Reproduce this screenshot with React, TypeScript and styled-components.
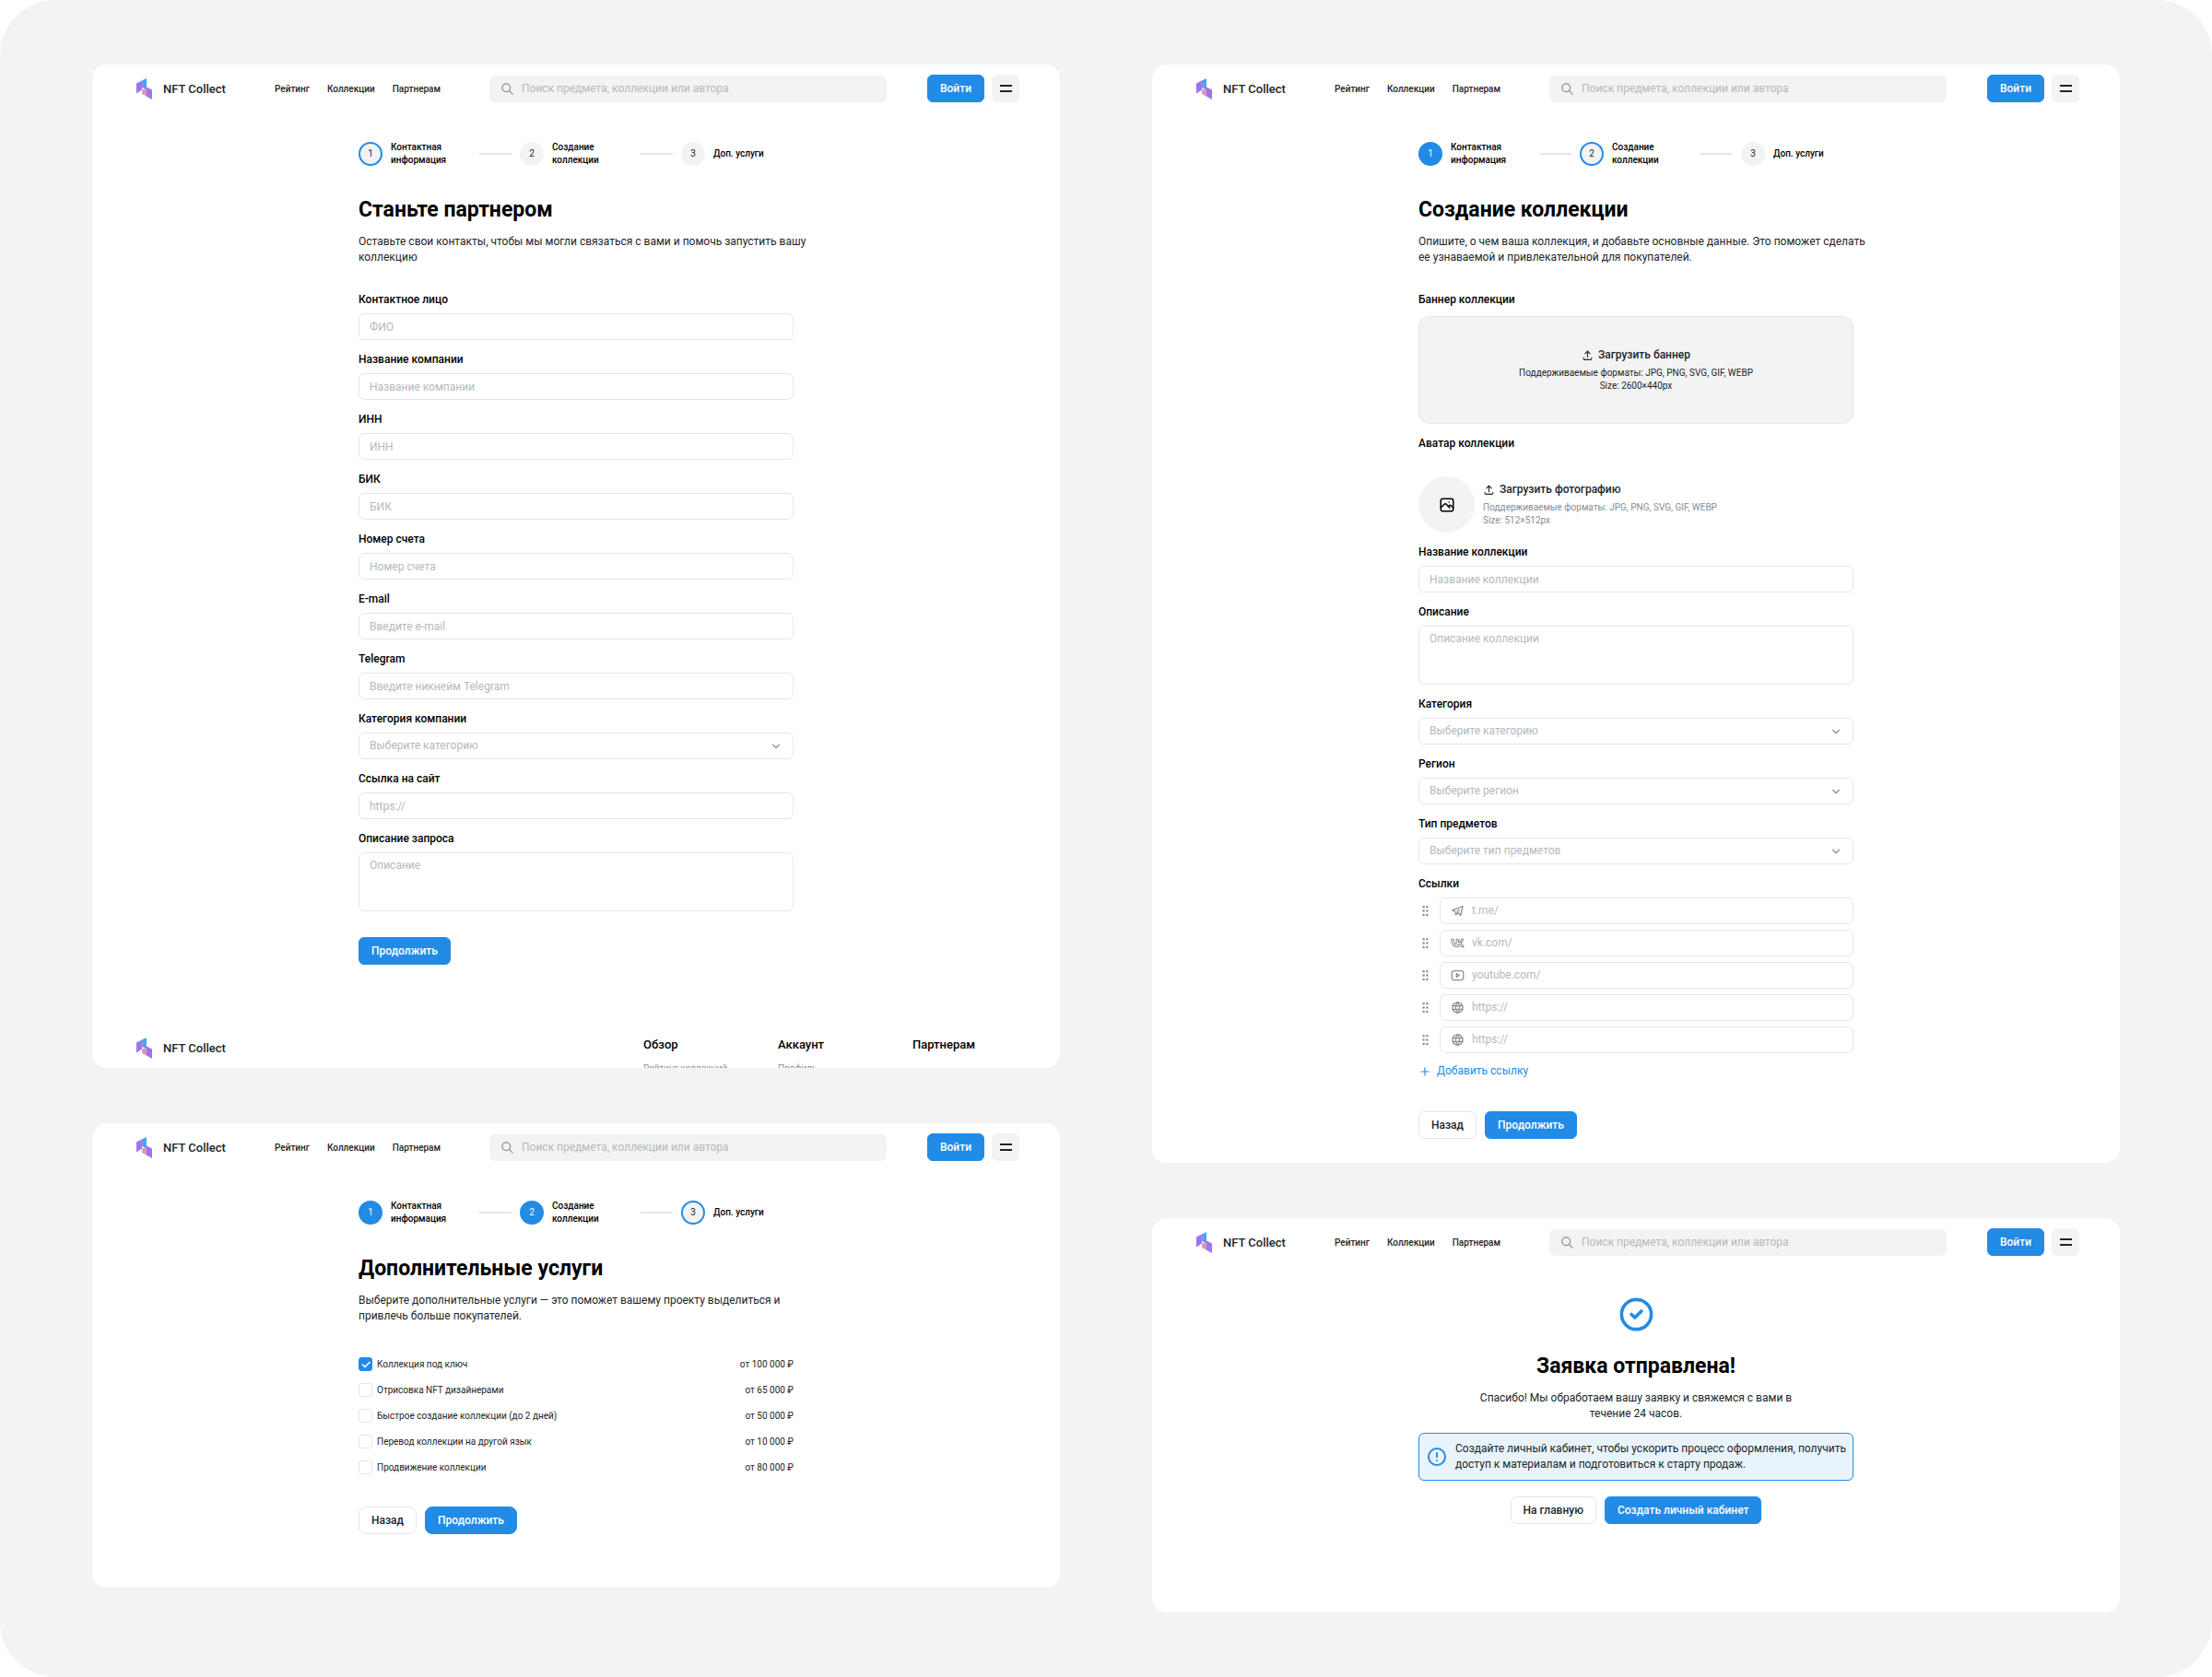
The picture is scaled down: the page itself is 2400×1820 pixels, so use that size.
import React, { useId, useState } from "react";
import styled, { createGlobalStyle, css } from "styled-components";
import {
  TbAlertCircle,
  TbBrandTelegram,
  TbBrandYoutube,
  TbCheck,
  TbChevronDown,
  TbCircleCheck,
  TbGripVertical,
  TbPhoto,
  TbPlus,
  TbSearch,
  TbUpload,
  TbWorld,
} from "react-icons/tb";

const color = {
  page: "#f3f3f3",
  blue: "#228be6",
  ink: "#212529",
  grey: "#868e96",
  hint: "#b4b9be",
  line: "#e3e6e8",
};

const GlobalStyle = createGlobalStyle`
  *, *::before, *::after { box-sizing: border-box; }
  body {
    margin: 0;
    background: #fff;
    color: ${color.ink};
    font: 400 12px/17px Roboto, "Liberation Sans", sans-serif;
  }
  button, input, select, textarea { font: inherit; color: inherit; }
  button { cursor: pointer; }
  h1, h2, p, ul, ol { margin: 0; padding: 0; }
  ul, ol { list-style: none; }
  a { color: inherit; text-decoration: none; }
  svg { display: block; flex: none; }
`;

const Board = styled.main`
  display: grid;
  grid-template-columns: 1fr 1fr;
  gap: 100px;
  min-height: 100vh;
  padding: 70px 100px;
  border-radius: 60px;
  background: ${color.page};
`;

const Stack = styled.div`
  display: flex;
  flex-direction: column;
  gap: 60px;
`;

const Screen = styled.section`
  border-radius: 16px;
  background: #fff;
  overflow: hidden;
`;

const Header = styled.header`
  display: flex;
  align-items: center;
  padding: 11px 44px 12px 48px;
`;

const Brand = styled.a`
  display: flex;
  align-items: center;
  gap: 12px;
  width: 150px;
  font-size: 13px;
  font-weight: 500;
`;

const Nav = styled.nav`
  display: flex;
  gap: 19px;
  margin-right: 53px;
  font-size: 10px;
  font-weight: 500;
`;

const SearchBox = styled.label`
  display: flex;
  flex: 1;
  align-items: center;
  gap: 8px;
  height: 29px;
  padding: 0 12px;
  border-radius: 6px;
  background: ${color.page};
  color: ${color.grey};
`;

const BareInput = styled.input`
  flex: 1;
  min-width: 0;
  padding: 0;
  border: 0;
  outline: 0;
  background: transparent;
  color: ${color.ink};
  &::placeholder { color: ${color.hint}; opacity: 1; }
`;

const HeaderActions = styled.div`
  display: flex;
  gap: 8px;
  margin-left: 44px;
`;

const Button = styled.button<{ $outline?: boolean; $round?: boolean }>`
  height: 30px;
  padding: 0 13px;
  border: 1px solid ${(p) => (p.$outline ? color.line : color.blue)};
  border-radius: ${(p) => (p.$round ? 8 : 6)}px;
  background: ${(p) => (p.$outline ? "#fff" : color.blue)};
  color: ${(p) => (p.$outline ? color.ink : "#fff")};
  font-weight: 500;
  white-space: nowrap;
`;

const MenuButton = styled.button`
  display: flex;
  flex-direction: column;
  align-items: center;
  justify-content: center;
  gap: 4px;
  width: 30px;
  height: 30px;
  padding: 0;
  border: 0;
  border-radius: 6px;
  background: ${color.page};
`;

const MenuLine = styled.span`
  width: 13px;
  height: 2px;
  background: ${color.ink};
`;

const Content = styled.div<{ $bottom: number; $centered?: boolean }>`
  width: 100%;
  max-width: 472px;
  margin: 0 auto;
  padding: 30px 0 ${(p) => p.$bottom}px;
  ${(p) =>
    p.$centered &&
    css`
      display: flex;
      flex-direction: column;
      align-items: center;
      text-align: center;
    `}
`;

const StepList = styled.ol`
  display: flex;
  align-items: center;
  gap: 9px;
  height: 28px;
`;

const Step = styled.li`
  display: flex;
  align-items: center;
  gap: 9px;
  width: 122px;
  color: #000;
  font-size: 10px;
  font-weight: 500;
  line-height: 14px;
`;

const StepRule = styled.li`
  width: 35px;
  height: 2px;
  background: #e4e6e8;
`;

type StepState = "done" | "current" | "next";

const StepMark = styled.span<{ $state: StepState }>`
  display: grid;
  flex: none;
  place-items: center;
  width: 26px;
  height: 26px;
  border: 2px solid ${(p) => (p.$state === "next" ? color.page : color.blue)};
  border-radius: 50%;
  background: ${(p) => (p.$state === "done" ? color.blue : color.page)};
  color: ${(p) => (p.$state === "done" ? "#fff" : color.ink)};
  font-weight: 400;
`;

const StepText = styled.span`
  width: 70px;
`;

const Title = styled.h1<{ $top?: number }>`
  margin-top: ${(p) => p.$top ?? 32}px;
  color: #000;
  font-size: 23px;
  font-weight: 700;
  line-height: 30px;
`;

const Lead = styled.p`
  margin-top: 11px;
  white-space: nowrap;
`;

const Form = styled.form`
  display: flex;
  flex-direction: column;
  gap: 13px;
  margin-top: 29px;
`;

const FieldBox = styled.div`
  display: flex;
  flex-direction: column;
  gap: 6px;
`;

const labelText = css`
  color: #000;
  font-weight: 500;
`;

const Label = styled.label`
  ${labelText}
`;

const GroupLabel = styled.span`
  ${labelText}
`;

const frame = css`
  width: 100%;
  border: 1px solid ${color.line};
  border-radius: 6px;
  background: #fff;
`;

const TextInput = styled.input`
  ${frame}
  height: 29px;
  padding: 0 11px;
  &::placeholder { color: ${color.hint}; opacity: 1; }
`;

const TextArea = styled.textarea`
  ${frame}
  display: block;
  height: 64px;
  padding: 5px 11px;
  resize: none;
  &::placeholder { color: ${color.hint}; opacity: 1; }
`;

const SelectWrap = styled.div`
  display: grid;
  align-items: center;
  color: ${color.grey};
  > * { grid-area: 1 / 1; }
  > svg { justify-self: end; margin-right: 12px; pointer-events: none; }
`;

const Select = styled.select`
  ${frame}
  height: 29px;
  padding: 0 11px;
  color: ${color.hint};
  appearance: none;
`;

const Actions = styled.div<{ $top: number }>`
  display: flex;
  gap: 9px;
  margin-top: ${(p) => p.$top}px;
`;

const Footer = styled.footer`
  display: flex;
  align-items: flex-start;
  justify-content: space-between;
  height: 38px;
  padding: 5px 14px 0 48px;
  overflow: hidden;
`;

const FooterColumns = styled.div`
  display: grid;
  grid-template-columns: repeat(3, 146px);
`;

const FooterTitle = styled.h2`
  color: #000;
  font-size: 13px;
  font-weight: 500;
  line-height: 15px;
`;

const FooterLink = styled.a`
  display: block;
  margin-top: 12px;
  color: ${color.grey};
  font-size: 10px;
  line-height: 14px;
`;

const BannerDrop = styled.button`
  display: flex;
  flex-direction: column;
  align-items: center;
  justify-content: center;
  gap: 4px;
  width: 100%;
  height: 117px;
  margin: 3px 0 0;
  border: 1px solid ${color.line};
  border-radius: 12px;
  background: ${color.page};
`;

const UploadTitle = styled.span`
  display: flex;
  align-items: center;
  gap: 5px;
  font-weight: 500;
`;

const UploadHint = styled.span<{ $muted?: boolean }>`
  color: ${(p) => (p.$muted ? color.grey : color.ink)};
  font-size: 10px;
  line-height: 14px;
`;

const AvatarRow = styled.button`
  display: flex;
  align-items: center;
  gap: 9px;
  margin-top: 21px;
  padding: 0;
  border: 0;
  background: none;
  text-align: left;
`;

const AvatarCircle = styled.span`
  display: grid;
  place-items: center;
  width: 61px;
  height: 61px;
  border-radius: 50%;
  background: ${color.page};
  color: #000;
`;

const AvatarText = styled.span`
  display: flex;
  flex-direction: column;
  gap: 4px;
`;

const LinkRow = styled.div`
  display: flex;
  align-items: center;
  gap: 8px;
  color: ${color.grey};
`;

const LinkBox = styled.label`
  ${frame}
  display: flex;
  align-items: center;
  gap: 8px;
  height: 29px;
  padding: 0 11px;
`;

const AddLink = styled.button`
  display: flex;
  align-items: center;
  gap: 6px;
  align-self: flex-start;
  margin-top: 5px;
  padding: 0;
  border: 0;
  background: none;
  color: ${color.blue};
`;

const ServiceList = styled.ul`
  display: grid;
  gap: 13px;
  margin-top: 36px;
`;

const ServiceRow = styled.li`
  display: flex;
  align-items: center;
  justify-content: space-between;
  font-size: 10px;
  line-height: 15px;
`;

const ServiceLabel = styled.label`
  display: flex;
  align-items: center;
  gap: 5px;
`;

const CheckWrap = styled.span`
  display: grid;
  place-items: center;
  color: #fff;
  > * { grid-area: 1 / 1; }
  > svg { pointer-events: none; }
`;

const CheckInput = styled.input`
  width: 15px;
  height: 15px;
  margin: 0;
  border: 1px solid ${color.line};
  border-radius: 3px;
  background: #fff;
  appearance: none;
  &:checked { border-color: ${color.blue}; background: ${color.blue}; }
`;

const SuccessMark = styled(TbCircleCheck)`
  color: ${color.blue};
`;

const Notice = styled.div`
  display: flex;
  align-items: center;
  gap: 8px;
  width: 100%;
  margin-top: 12px;
  padding: 8px 7px;
  border: 1px solid ${color.blue};
  border-radius: 6px;
  background: #e8f3fc;
  text-align: left;
  > svg { color: ${color.blue}; }
`;

function Logo() {
  return (
    <svg width="17" height="23" viewBox="0 0 17 23" aria-hidden="true">
      <path d="M0 5.500 6 2.500V12.500L0 16.500z" fill="#9c74ee" />
      <path d="M5 3 11 0v13L5 9z" fill="#4aa3f3" />
      <path d="M5 3 8 5v6L5 9z" fill="#8f8cf0" />
      <path d="M10 9 17 12.500V23l-7-4z" fill="#a074ec" />
      <path d="M6 12.500 11 11v8.500L6 17z" fill="#d79ab6" />
    </svg>
  );
}

function VkIcon({ size }: { size: number }) {
  return (
    <svg
      width={size}
      height={size}
      viewBox="1 0 22 22"
      fill="none"
      stroke="currentColor"
      strokeWidth="1.600"
      strokeLinejoin="round"
      aria-hidden="true"
    >
      <path d="M12.770 17.290c-6.830 0-10.730-4.680-10.900-12.470h3.420c.11 5.720 2.630 8.140 4.630 8.640V4.820h3.220v4.930c1.970-.21 4.040-2.460 4.740-4.930h3.220c-.54 3.050-2.780 5.300-4.380 6.220 1.600.75 4.160 2.700 5.130 6.250h-3.550c-.76-2.370-2.660-4.210-5.170-4.460v4.460z" />
    </svg>
  );
}

function SiteHeader() {
  return (
    <Header>
      <Brand href="#">
        <Logo />
        NFT Collect
      </Brand>
      <Nav>
        <a href="#rating">Рейтинг</a>
        <a href="#collections">Коллекции</a>
        <a href="#partners">Партнерам</a>
      </Nav>
      <SearchBox>
        <TbSearch size={15} strokeWidth={2} />
        <BareInput type="search" aria-label="Поиск" placeholder="Поиск предмета, коллекции или автора" />
      </SearchBox>
      <HeaderActions>
        <Button type="button">Войти</Button>
        <MenuButton type="button" aria-label="Меню">
          <MenuLine />
          <MenuLine />
        </MenuButton>
      </HeaderActions>
    </Header>
  );
}

const stepNames = ["Контактная информация", "Создание коллекции", "Доп. услуги"];

function Stepper({ current }: { current: number }) {
  return (
    <StepList>
      {stepNames.map((name, i) => (
        <React.Fragment key={name}>
          {i > 0 && <StepRule aria-hidden="true" />}
          <Step>
            <StepMark $state={i < current ? "done" : i === current ? "current" : "next"}>{i + 1}</StepMark>
            <StepText>{name}</StepText>
          </Step>
        </React.Fragment>
      ))}
    </StepList>
  );
}

type FieldProps = { label: string; hint: string; kind?: "text" | "area" | "select" };

function Field({ label, hint, kind = "text" }: FieldProps) {
  const id = useId();
  return (
    <FieldBox>
      <Label htmlFor={id}>{label}</Label>
      {kind === "text" && <TextInput id={id} placeholder={hint} />}
      {kind === "area" && <TextArea id={id} placeholder={hint} />}
      {kind === "select" && (
        <SelectWrap>
          <Select id={id}>
            <option>{hint}</option>
          </Select>
          <TbChevronDown size={14} strokeWidth={2} />
        </SelectWrap>
      )}
    </FieldBox>
  );
}

const partnerFields: FieldProps[] = [
  { label: "Контактное лицо", hint: "ФИО" },
  { label: "Название компании", hint: "Название компании" },
  { label: "ИНН", hint: "ИНН" },
  { label: "БИК", hint: "БИК" },
  { label: "Номер счета", hint: "Номер счета" },
  { label: "E-mail", hint: "Введите e-mail" },
  { label: "Telegram", hint: "Введите никнейм Telegram" },
  { label: "Категория компании", hint: "Выберите категорию", kind: "select" },
  { label: "Ссылка на сайт", hint: "https://" },
  { label: "Описание запроса", hint: "Описание", kind: "area" },
];

function PartnerScreen() {
  return (
    <Screen>
      <SiteHeader />
      <Content $bottom={74}>
        <Stepper current={0} />
        <Title>Станьте партнером</Title>
        <Lead>
          Оставьте свои контакты, чтобы мы могли связаться с вами и помочь запустить вашу
          <br />
          коллекцию
        </Lead>
        <Form>
          {partnerFields.map((f) => (
            <Field key={f.label} {...f} />
          ))}
          <Actions $top={15}>
            <Button type="button">Продолжить</Button>
          </Actions>
        </Form>
      </Content>
      <Footer>
        <Brand href="#">
          <Logo />
          NFT Collect
        </Brand>
        <FooterColumns>
          <div>
            <FooterTitle>Обзор</FooterTitle>
            <FooterLink href="#rating">Рейтинг коллекций</FooterLink>
          </div>
          <div>
            <FooterTitle>Аккаунт</FooterTitle>
            <FooterLink href="#profile">Профиль</FooterLink>
          </div>
          <div>
            <FooterTitle>Партнерам</FooterTitle>
          </div>
        </FooterColumns>
      </Footer>
    </Screen>
  );
}

const links = [
  { Icon: TbBrandTelegram, hint: "t.me/" },
  { Icon: VkIcon, hint: "vk.com/" },
  { Icon: TbBrandYoutube, hint: "youtube.com/" },
  { Icon: TbWorld, hint: "https://" },
  { Icon: TbWorld, hint: "https://" },
];

function CollectionScreen() {
  return (
    <Screen>
      <SiteHeader />
      <Content $bottom={26}>
        <Stepper current={1} />
        <Title>Создание коллекции</Title>
        <Lead>
          Опишите, о чем ваша коллекция, и добавьте основные данные. Это поможет сделать
          <br />
          ее узнаваемой и привлекательной для покупателей.
        </Lead>
        <Form>
          <FieldBox>
            <GroupLabel>Баннер коллекции</GroupLabel>
            <BannerDrop type="button">
              <UploadTitle>
                <TbUpload size={13} />
                Загрузить баннер
              </UploadTitle>
              <UploadHint>
                Поддерживаемые форматы: JPG, PNG, SVG, GIF, WEBP
                <br />
                Size: 2600×440px
              </UploadHint>
            </BannerDrop>
          </FieldBox>
          <FieldBox>
            <GroupLabel>Аватар коллекции</GroupLabel>
            <AvatarRow type="button">
              <AvatarCircle>
                <TbPhoto size={18} />
              </AvatarCircle>
              <AvatarText>
                <UploadTitle>
                  <TbUpload size={13} />
                  Загрузить фотографию
                </UploadTitle>
                <UploadHint $muted>
                  Поддерживаемые форматы: JPG, PNG, SVG, GIF, WEBP
                  <br />
                  Size: 512×512px
                </UploadHint>
              </AvatarText>
            </AvatarRow>
          </FieldBox>
          <Field label="Название коллекции" hint="Название коллекции" />
          <Field label="Описание" hint="Описание коллекции" kind="area" />
          <Field label="Категория" hint="Выберите категорию" kind="select" />
          <Field label="Регион" hint="Выберите регион" kind="select" />
          <Field label="Тип предметов" hint="Выберите тип предметов" kind="select" />
          <FieldBox>
            <GroupLabel>Ссылки</GroupLabel>
            {links.map(({ Icon, hint }, i) => (
              <LinkRow key={i}>
                <TbGripVertical size={15} />
                <LinkBox>
                  <Icon size={15} />
                  <BareInput aria-label={`Ссылка ${i + 1}`} placeholder={hint} />
                </LinkBox>
              </LinkRow>
            ))}
            <AddLink type="button">
              <TbPlus size={14} />
              Добавить ссылку
            </AddLink>
          </FieldBox>
          <Actions $top={22}>
            <Button type="button" $outline>
              Назад
            </Button>
            <Button type="button">Продолжить</Button>
          </Actions>
        </Form>
      </Content>
    </Screen>
  );
}

const services = [
  { name: "Коллекция под ключ", price: "от 100 000 ₽" },
  { name: "Отрисовка NFT дизайнерами", price: "от 65 000 ₽" },
  { name: "Быстрое создание коллекции (до 2 дней)", price: "от 50 000 ₽" },
  { name: "Перевод коллекции на другой язык", price: "от 10 000 ₽" },
  { name: "Продвижение коллекции", price: "от 80 000 ₽" },
];

function ServicesScreen() {
  const [picked, setPicked] = useState([0]);
  const toggle = (i: number) =>
    setPicked((list) => (list.includes(i) ? list.filter((n) => n !== i) : [...list, i]));
  return (
    <Screen>
      <SiteHeader />
      <Content $bottom={58}>
        <Stepper current={2} />
        <Title>Дополнительные услуги</Title>
        <Lead>
          Выберите дополнительные услуги — это поможет вашему проекту выделиться и
          <br />
          привлечь больше покупателей.
        </Lead>
        <ServiceList>
          {services.map((s, i) => (
            <ServiceRow key={s.name}>
              <ServiceLabel>
                <CheckWrap>
                  <CheckInput type="checkbox" checked={picked.includes(i)} onChange={() => toggle(i)} />
                  {picked.includes(i) && <TbCheck size={12} strokeWidth={3} />}
                </CheckWrap>
                {s.name}
              </ServiceLabel>
              <span>{s.price}</span>
            </ServiceRow>
          ))}
        </ServiceList>
        <Actions $top={35}>
          <Button type="button" $outline $round>
            Назад
          </Button>
          <Button type="button" $round>
            Продолжить
          </Button>
        </Actions>
      </Content>
    </Screen>
  );
}

function SentScreen() {
  return (
    <Screen>
      <SiteHeader />
      <Content $bottom={96} $centered>
        <SuccessMark size={43} />
        <Title $top={20}>Заявка отправлена!</Title>
        <Lead>
          Спасибо! Мы обработаем вашу заявку и свяжемся с вами в
          <br />
          течение 24 часов.
        </Lead>
        <Notice role="status">
          <TbAlertCircle size={24} />
          <p>
            Создайте личный кабинет, чтобы ускорить процесс оформления, получить доступ к материалам и
            подготовиться к старту продаж.
          </p>
        </Notice>
        <Actions $top={17}>
          <Button type="button" $outline>
            На главную
          </Button>
          <Button type="button">Создать личный кабинет</Button>
        </Actions>
      </Content>
    </Screen>
  );
}

export default function App() {
  return (
    <>
      <GlobalStyle />
      <Board>
        <Stack>
          <PartnerScreen />
          <ServicesScreen />
        </Stack>
        <Stack>
          <CollectionScreen />
          <SentScreen />
        </Stack>
      </Board>
    </>
  );
}
